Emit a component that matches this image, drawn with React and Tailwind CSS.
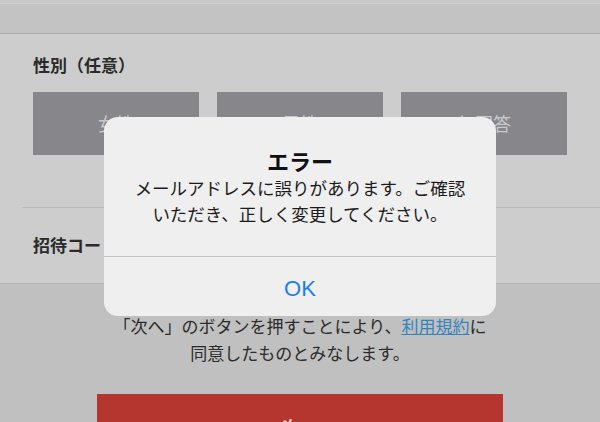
export default function App() {
  const font = { fontFamily: '"Noto Sans CJK JP", "Noto Sans", sans-serif' };
  return (
    <div className="relative w-[600px] h-[422px] overflow-hidden bg-[#cdcdcd]" style={font}>
      <div className="h-[3px] bg-[#c8c8c8]" />
      <div className="h-px bg-[#d3d3d3]" />
      <div className="h-[29px] bg-[#c3c3c3]" />
      <div className="h-px bg-[#acacac]" />
      <div className="px-[33px]">
        <div className="mt-[19px] h-[24px] leading-[24px] text-[17px] font-bold text-[#2a2a2a]">性別（任意）</div>
        <div className="mt-[15px] grid grid-cols-3 gap-[18px]">
          {['女性', '男性', '無回答'].map((t) => (
            <div key={t} className="h-[63px] bg-[#87868b] flex items-center justify-center text-[18px] text-[#c9c9cc]">
              {t}
            </div>
          ))}
        </div>
      </div>
      <div className="mt-[52px] ml-[22px] h-px bg-[#b9b9b9]" />
      <div className="mt-[25px] px-[33px] h-[24px] leading-[24px] text-[17px] font-bold text-[#2a2a2a]">招待コード</div>
      <div className="mt-[26px] h-px bg-[#b4b4b4]" />
      <div className="bg-[#c0c0c0] h-[200px]">
        <div className="pt-[28px] text-center text-[17px] leading-[27px] text-[#2b2b2b]">
          <div>
            「次へ」のボタンを押すことにより、<span className="text-[#3584bd] underline">利用規約</span>に
          </div>
          <div>同意したものとみなします。</div>
        </div>
        <div className="mt-[28px] mx-[97px] h-[60px] bg-[#b5362f] flex justify-center pt-[20px] text-[18px] font-bold text-[#e9d0ce]">
          次へ
        </div>
      </div>

      <div className="absolute left-[104px] top-[117px] w-[392px] h-[199px] rounded-[14px] bg-[#efefef] flex flex-col">
        <div className="pt-[30px] h-[56px] text-center text-[22px] leading-[26px] font-bold text-[#111]">エラー</div>
        <div className="mt-[2px] text-center text-[17.5px] leading-[26px] text-[#1c1c1c]">
          <div>メールアドレスに誤りがあります。ご確認</div>
          <div>いただき、正しく変更してください。</div>
        </div>
        <div className="mt-[29px] h-px bg-[#c4c4c6]" />
        <div className="flex-1 flex items-center justify-center pt-[4px] text-[22px] text-[#1a7fe6]" style={{ fontFamily: '"Liberation Sans", Arial, sans-serif' }}>
          OK
        </div>
      </div>
    </div>
  );
}
